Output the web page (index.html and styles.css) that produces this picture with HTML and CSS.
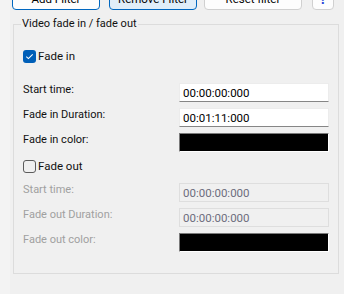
FILE: index.html
```html
<!DOCTYPE html>
<html lang="en">

<head>
    <meta charset="utf-8">
    <meta name="viewport" content="width=device-width, initial-scale=1.0">
    <title>Video fade</title>
    <link rel="stylesheet" href="styles.css">
</head>

<body>
    <div class="page">
        <div class="toolbar">
            <button class="btn btn-default add">Add Filter</button>
            <button class="btn btn-active remove">Remove Filter</button>
            <button class="btn reset">Reset filter</button>
            <button class="btn help">?</button>
        </div>

        <fieldset class="group">
            <legend>Video fade in / fade out</legend>
            <div class="content">
                <label class="check">
                    <span class="box checked">
                        <svg width="13" height="13" viewBox="0 0 13 13">
                            <path d="M3.3 6.6 L5.4 8.6 L9.7 4.3" fill="none" stroke="#fff" stroke-width="1.1" />
                        </svg>
                    </span>
                    Fade in
                </label>
                <div class="row first">
                    <span class="label">Start time:</span>
                    <div class="field">00:00:00:000</div>
                </div>
                <div class="row">
                    <span class="label">Fade in Duration:</span>
                    <div class="field">00:01:11:000</div>
                </div>
                <div class="row">
                    <span class="label">Fade in color:</span>
                    <div class="swatch"></div>
                </div>

                <label class="check out">
                    <span class="box"></span>
                    Fade out
                </label>
                <div class="row first disabled">
                    <span class="label">Start time:</span>
                    <div class="field">00:00:00:000</div>
                </div>
                <div class="row disabled">
                    <span class="label">Fade out Duration:</span>
                    <div class="field">00:00:00:000</div>
                </div>
                <div class="row disabled">
                    <span class="label">Fade out color:</span>
                    <div class="swatch"></div>
                </div>
            </div>
        </fieldset>
    </div>
</body>

</html>
```
FILE: styles.css
```css
body {
    margin: 0;
    background-color: #f3f3f3;
    font-family: Roboto, "Noto Sans", sans-serif;
    font-size: 11px;
    color: #000;
}

.page {
    margin-left: 10px;
    height: 294px;
    background-color: #f0f0f0;
    overflow: hidden;
}

.toolbar {
    display: flex;
    margin-top: -12px;
    padding-left: 2px;
}

.btn {
    height: 22px;
    padding: 0;
    border: 1px solid #d0d0d0;
    border-radius: 4px;
    background-color: #fdfdfd;
    font-family: inherit;
    font-size: 11.5px;
    color: #000;
}

.btn-default {
    border-color: #0067c0;
}

.btn-active {
    border-color: #0067c0;
    background-color: #e0eef9;
}

.add {
    width: 88px;
}

.remove {
    width: 88px;
    margin-left: 9px;
}

.reset {
    width: 98px;
    margin-left: 7px;
}

.help {
    width: 22px;
    margin-left: 10px;
    color: #1a3fd8;
    font-weight: bold;
    font-size: 14px;
}

.group {
    margin: 6px 5px 0 3px;
    padding: 0 9px 21px 7px;
    border: 1px solid #dcdcdc;
    min-width: 0;
}

.group legend {
    padding: 0 1px;
    line-height: 16px;
    font-size: 11px;
    color: #111;
}

.content {
    padding-left: 2px;
}

.check {
    display: flex;
    align-items: center;
    height: 16px;
    margin-top: 16px;
    font-size: 11.5px;
    color: #111;
}

.check.out {
    margin-top: 6px;
}

.box {
    box-sizing: border-box;
    width: 13px;
    height: 13px;
    margin-right: 2px;
    border: 1px solid #5c5c5c;
    border-radius: 3px;
}

.box.checked {
    border: none;
    background-color: #005fb8;
}

.box svg {
    display: block;
}

.row {
    display: grid;
    grid-template-columns: 156px 150px;
    height: 19px;
    margin-top: 6px;
}

.row.first {
    margin-top: 19px;
}

.check.out + .row.first {
    margin-top: 9px;
}

.label {
    line-height: 14px;
    color: #111;
}

.field {
    box-sizing: border-box;
    height: 19px;
    padding-left: 3px;
    line-height: 18px;
    font-size: 11.5px;
    background-color: #fff;
    border: 1px solid #ececec;
    border-bottom-color: #868686;
    color: #000;
}

.swatch {
    box-sizing: border-box;
    height: 19px;
    background-color: #000;
    border: 1px solid #fff;
    border-top-color: #7a7a7a;
    border-left-color: #7a7a7a;
}

.disabled .label {
    color: #a0a0a0;
}

.disabled .field {
    background-color: #f0f0f0;
    border: 1px solid #dedede;
    color: #6d6d7d;
}
```
